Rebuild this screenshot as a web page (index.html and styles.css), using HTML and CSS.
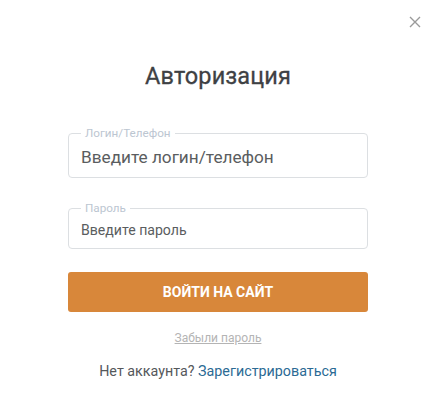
FILE: index.html
```html
<!DOCTYPE html>
<html lang="ru">
<head>
<meta charset="utf-8">
<title>Авторизация</title>
<link rel="stylesheet" href="styles.css">
</head>
<body>
<div class="modal">
  <button class="close" aria-label="Закрыть">
    <svg width="12" height="12" viewBox="0 0 12 12"><path d="M1 1L11 11M11 1L1 11" stroke="#9a9a9a" stroke-width="1.4" fill="none"/></svg>
  </button>
  <h1 class="title">Авторизация</h1>
  <form class="form">
    <fieldset class="field field-login">
      <legend class="legend">Логин/Телефон</legend>
      <span class="placeholder">Введите логин/телефон</span>
    </fieldset>
    <fieldset class="field field-pass">
      <legend class="legend">Пароль</legend>
      <span class="placeholder small">Введите пароль</span>
    </fieldset>
    <button type="button" class="submit">ВОЙТИ НА САЙТ</button>
    <a class="forgot" href="#">Забыли пароль</a>
    <p class="register">Нет аккаунта? <a href="#" class="reg-link">Зарегистрироваться</a></p>
  </form>
</div>
</body>
</html>
```
FILE: styles.css
```css
* { box-sizing: border-box; }
html, body { margin: 0; padding: 0; background: #fff; }
body { font-family: Roboto, "Noto Sans", sans-serif; width: 436px; height: 413px; }
.modal { position: relative; width: 436px; height: 413px; display: flex; flex-direction: column; align-items: center; padding-top: 61px; }
.close { position: absolute; top: 16px; right: 15px; width: 12px; height: 12px; padding: 0; border: 0; background: none; display: flex; }
.title { margin: 0; font-size: 23.5px; font-weight: 400; color: #3e4144; line-height: 30px; letter-spacing: 0.1px; -webkit-text-stroke: 0.3px #3e4144; }
.form { width: 300px; margin-top: 36px; display: flex; flex-direction: column; align-items: stretch; }
.field { margin: 0; border: 1px solid #dcdfe2; border-radius: 4px; padding: 0 12px 2px; display: block; min-width: 0; }
.field-pass { margin-top: 24px; }
.legend { padding: 0 4px; margin-left: 0; font-size: 11.7px; color: #bcc6d1; line-height: 13px; }
.placeholder { display: block; font-size: 17.2px; color: #5a5d60; line-height: 35px; }
.placeholder.small { font-size: 14.1px; line-height: 31px; }
.submit { margin-top: 23px; height: 40px; border: 0; border-radius: 3px; background: #d8873a; color: #fff; font-family: inherit; font-weight: 700; font-size: 14px; letter-spacing: 0px; }
.forgot { margin-top: 19px; align-self: center; font-size: 12px; color: #b4b4b4; text-decoration: underline; line-height: 14px; }
.register { margin: 17px 0 0; text-align: center; font-size: 14.3px; color: #55585b; line-height: 18px; }
.reg-link { color: #2b6a94; text-decoration: none; }
```
